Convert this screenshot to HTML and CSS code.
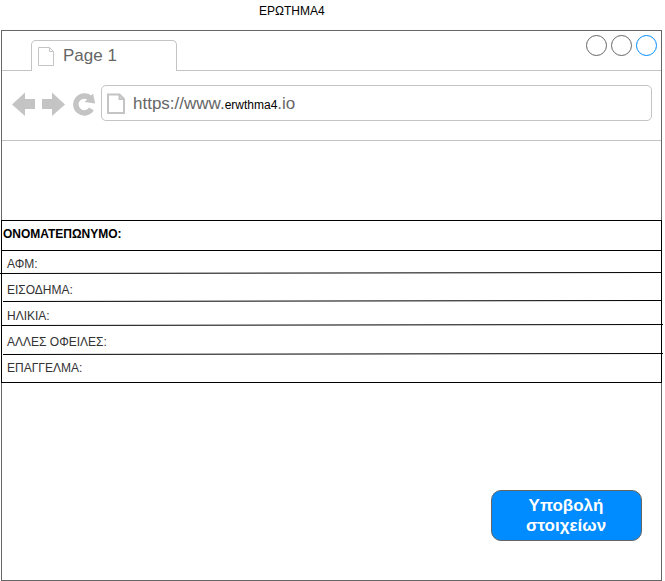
FILE: index.html
```html
<!DOCTYPE html>
<html lang="el">
<head>
<meta charset="utf-8">
<title>ΕΡΩΤΗΜΑ4</title>
<link rel="stylesheet" href="styles.css">
</head>
<body>
<h1 class="title">ΕΡΩΤΗΜΑ4</h1>
<main class="window">
  <header class="tabbar">
    <div class="tab">
      <svg class="tab-icon" width="17" height="20" viewBox="0 0 17 20"><path d="M.5.5h11l4 4v14H.5zM11.500.5v4h4"/></svg>
      <span>Page 1</span>
    </div>
    <div class="controls"><i></i><i></i><i class="active"></i></div>
  </header>
  <nav class="toolbar">
    <svg class="nav-icons" width="84" height="26" viewBox="0 0 84 26">
      <path class="fill" d="M0 13.500 13 1.500v6.500h10v10H13v7zM53 13.500 40 1.500v6.500H30v10h10v7z"/>
      <path class="reload" d="M78.500 7.500A8.500 8.500 0 1 0 79.500 18"/>
      <path class="fill" d="M81 2.500 83.200 12.500 72.500 11z"/>
    </svg>
    <div class="address">
      <svg class="address-icon" width="19" height="22" viewBox="0 0 19 22"><path class="page" d="M1 1.500h11.500L17 6V20H1zM12.500 1.500V6H17"/></svg>
      <span class="url">https://www.<small>erwthma4</small>.io</span>
    </div>
  </nav>
  <section class="form">
    <div class="name">ΟΝΟΜΑΤΕΠΩΝΥΜΟ:</div>
    <div class="row">ΑΦΜ:</div>
    <div class="row">ΕΙΣΟΔΗΜΑ:</div>
    <div class="row">ΗΛΙΚΙΑ:</div>
    <div class="row">ΑΛΛΕΣ ΟΦΕΙΛΕΣ:</div>
    <div class="row">ΕΠΑΓΓΕΛΜΑ:</div>
    <svg class="rules" width="663" height="163" viewBox="0 0 663 163"><path d="M0 53.500 661 52.500M3 81.500 661 80.500M1 105.500 663 104.500M3 134.500 663 133.500"/></svg>
  </section>
  <button class="submit">Υποβολή<br>στοιχείων</button>
</main>
</body>
</html>
```
FILE: styles.css
```css
* { box-sizing: border-box; }
body {
  margin: 0;
  width: 665px;
  height: 581px;
  overflow: hidden;
  background: #fff;
  font-family: "Liberation Sans", Arial, sans-serif;
  font-size: 12px;
  color: #000;
}
.title {
  margin: 0;
  height: 30px;
  padding: 4px 0 0 259px;
  font-size: 12px;
  font-weight: 400;
  line-height: 14px;
}
.window {
  width: 661px;
  height: 551px;
  margin-left: 1px;
  border: 1px solid #666;
  display: flex;
  flex-direction: column;
}
.tabbar {
  height: 40px;
  flex: none;
  display: flex;
  justify-content: space-between;
  border-bottom: 1px solid #c4c4c4;
  padding: 4px 4px 0 29px;
}
.tab {
  width: 146px;
  height: 31px;
  margin-top: 5px;
  padding: 0 0 0 6px;
  display: flex;
  align-items: center;
  gap: 8px;
  border: 1px solid #c4c4c4;
  border-bottom: 0;
  border-radius: 5px 5px 0 0;
  background: #fff;
  font-size: 17px;
  color: #666;
}
svg { display: block; flex: none; fill: none; stroke: #c4c4c4; }
.tab-icon { margin-top: 1px; }
.controls { display: flex; gap: 4px; }
.controls i {
  width: 21px;
  height: 21px;
  border: 1px solid #666;
  border-radius: 50%;
}
.controls .active { border-color: #008cff; }
.toolbar {
  height: 70px;
  flex: none;
  display: flex;
  align-items: flex-start;
  border-bottom: 1px solid #c4c4c4;
  padding: 14px 9px 0 10px;
}
.nav-icons { margin: 6px 5px 0 0; }
.nav-icons .fill { fill: #c4c4c4; stroke: none; }
.nav-icons .reload { stroke-width: 5.5; }
.address {
  flex: 1;
  height: 36px;
  display: flex;
  align-items: center;
  gap: 7px;
  padding-left: 5px;
  border: 1px solid #c4c4c4;
  border-radius: 5px;
}
.address-icon { margin-top: 2px; }
.page { stroke-width: 2; }
.url { margin-top: 2px; font-size: 17px; color: #666; }
.url small { font-size: 12px; color: #000; }
.form {
  position: relative;
  width: 661px;
  height: 163px;
  margin: 79px 0 0 -1px;
  border: 1px solid #000;
  flex: none;
}
.name {
  height: 30px;
  padding: 6px 0 0 1px;
  border-bottom: 1px solid #000;
  font-weight: 700;
  line-height: 14px;
}
.row {
  height: 26px;
  padding: 6px 0 0 5px;
  line-height: 14px;
  color: #333;
}
.rules { position: absolute; left: -2px; top: -1px; }
.rules path { stroke: #000; }
.submit {
  width: 151px;
  height: 51px;
  margin: 107px 19px 0 auto;
  padding: 0 1px 0 0;
  border: 1px solid #666;
  border-radius: 10px;
  background: #008cff;
  color: #fff;
  font: bold 17px/20px "Liberation Sans", Arial, sans-serif;
}
```
